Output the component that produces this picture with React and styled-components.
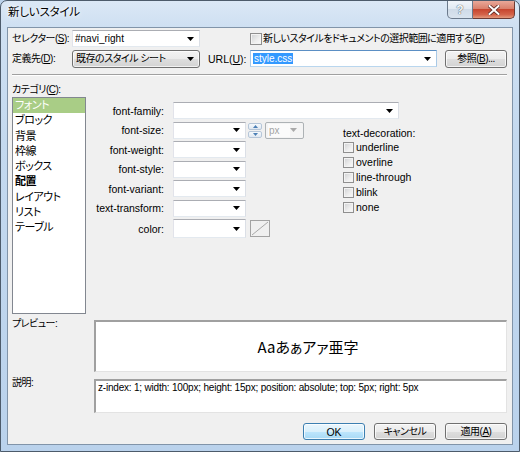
import React from 'react';
import styled, { createGlobalStyle, css } from 'styled-components';

const GlobalStyle = createGlobalStyle`
  html, body { margin: 0; padding: 0; background: #bcd3ec; }
  body {
    font-family: "Liberation Sans", "Noto Sans CJK JP", sans-serif;
    font-size: 10.5px;
    font-feature-settings: "palt";
    color: #000;
  }
  * { box-sizing: border-box; }
`;

const jpText = css`
  font-size: 10px;
  letter-spacing: -0.5px;
`;

const Window = styled.div`
  width: 520px;
  height: 452px;
  display: flex;
  flex-direction: column;
  border: 1px solid #4d5b6b;
  border-radius: 7px 7px 0 0;
  background: linear-gradient(180deg, #dbe8f6 0px, #cfe0f2 24px, #c4d9ef 140px, #bad2ec 100%);
  overflow: hidden;
`;

const TitleBar = styled.div`
  height: 26px;
  display: flex;
  align-items: flex-start;
  padding: 0 4px 0 7px;
`;

const Title = styled.div`
  font-size: 11.5px;
  letter-spacing: -0.2px;
  line-height: 16px;
  padding-top: 3px;
  color: #000;
  text-shadow: 0 0 6px #fff, 0 0 3px #fff;
`;

const CaptionGroup = styled.div`
  margin-left: auto;
  display: flex;
`;

const CaptionButton = styled.div`
  height: 18px;
  display: flex;
  align-items: center;
  justify-content: center;
  border: 1px solid #6b7a8c;
  border-top: none;
  ${p => p.$close ? css`
    width: 42px;
    border-left: none;
    border-color: #6d3a33;
    border-radius: 0 0 5px 0;
    background: linear-gradient(180deg, #e9a899 0%, #d9806c 45%, #c7462f 50%, #d4634a 80%, #e39a7d 100%);
  ` : css`
    width: 26px;
    border-radius: 0 0 0 5px;
    background: linear-gradient(180deg, #f1f5fa 0%, #e2eaf3 45%, #cfdbe8 50%, #d9e4ef 100%);
  `}
`;

const HelpGlyph = styled.span`
  font-family: "Liberation Sans", sans-serif;
  font-size: 12px;
  font-weight: bold;
  color: #f7f9fb;
  text-shadow: 0 0 1px #4e5a68, 0 0 1px #4e5a68;
  line-height: 1;
`;

const Client = styled.div`
  flex: 1;
  margin: 0 6px 6px;
  border: 1px solid #8194a9;
  background: #f0f0f0;
  padding: 2px 5px 3px 4px;
  display: flex;
  flex-direction: column;
`;

const TopGrid = styled.div`
  display: grid;
  grid-template-columns: 60px 128px 50px 187px 8px 62px;
  grid-template-rows: 17px 17px;
  row-gap: 3px;
  align-items: center;
`;

const Label = styled.span`
  white-space: nowrap;
  line-height: 14px;
  ${p => p.$jp && jpText}
  ${p => p.$indent && css`padding-left: ${p.$indent}px;`}
`;

const Key = styled.u`
  text-decoration: underline;
  text-underline-offset: 1px;
`;

const ComboField = styled.div`
  height: 17px;
  display: flex;
  align-items: center;
  padding: 0 5px 0 2px;
  background: #fff;
  border: 1px solid;
  border-color: ${p => p.$focus ? '#5b8fc4 #a9c9e6 #b9d6ee #a9c9e6' : '#abadb3 #dbdfe6 #e3e9ef #e2e3ea'};
`;

const FieldText = styled.span`
  flex: 1;
  white-space: nowrap;
  overflow: hidden;
  line-height: 14px;
  font-size: 10px;
  ${p => p.$jp && jpText}
`;

const Selected = styled.span`
  background: #3399ff;
  color: #fff;
  padding: 0 1px;
`;

const SelectButton = styled.div`
  height: 18px;
  display: flex;
  align-items: center;
  padding: 0 5px 0 3px;
  border: 1px solid #707070;
  border-radius: 3px;
  background: linear-gradient(180deg, #f3f3f3 0%, #ebebeb 50%, #dedede 50%, #d3d3d3 100%);
  box-shadow: inset 0 0 0 1px rgba(255, 255, 255, 0.7);
`;

const PushButton = styled.div`
  height: ${p => p.$h || 18}px;
  display: flex;
  align-items: center;
  justify-content: center;
  white-space: nowrap;
  line-height: 14px;
  ${p => p.$jp && jpText}
  border: 1px solid ${p => p.$default ? '#3c7fb1' : '#707070'};
  border-radius: 3px;
  background: ${p => p.$default
    ? 'linear-gradient(180deg, #eaf6fd 0%, #d9f0fc 50%, #bee6fd 50%, #a7d9f5 100%)'
    : 'linear-gradient(180deg, #f3f3f3 0%, #ebebeb 50%, #dedede 50%, #d3d3d3 100%)'};
  box-shadow: inset 0 0 0 1px rgba(255, 255, 255, 0.75);
  ${p => p.$width && css`width: ${p.$width}px;`}
`;

const CheckLine = styled.div`
  grid-column: 4 / 7;
  display: flex;
  align-items: center;
  gap: 1px;
  white-space: nowrap;
`;

const CheckBox = styled.span`
  flex: none;
  width: ${p => p.$size || 11}px;
  height: ${p => p.$size || 11}px;
  border: 1px solid #8f8f8f;
  background: linear-gradient(135deg, #cfd0d2 0%, #eeeeee 60%, #fafafa 100%);
  box-shadow: inset 0 0 0 1px #f3f3f3;
`;

const Separator = styled.div`
  margin-top: 7px;
  border-top: 1px solid #a0a0a0;
  border-bottom: 1px solid #fff;
`;

const SectionLabel = styled.div`
  margin-top: 7px;
  line-height: 14px;
  height: 14px;
  ${jpText}
`;

const MainArea = styled.div`
  display: flex;
  height: 217px;
`;

const ListBox = styled.div`
  width: 74px;
  flex: none;
  border: 1px solid #828790;
  background: #fff;
  display: flex;
  flex-direction: column;
`;

const ListItem = styled.div`
  height: 15.3px;
  line-height: 15px;
  padding-left: 2px;
  font-size: 11px;
  letter-spacing: -0.5px;
  white-space: nowrap;
  ${p => p.$selected && css`background: #a9cd86; color: #fff;`}
  ${p => p.$bold && css`font-weight: bold;`}
`;

const RightPanel = styled.div`
  flex: 1;
  display: flex;
  flex-direction: column;
  gap: 2.5px;
  padding-top: 5px;
`;

const FieldRow = styled.div`
  display: flex;
  align-items: center;
  height: ${p => p.$h || 17}px;
`;

const FieldLabel = styled.span`
  width: 78px;
  margin-right: 9px;
  text-align: right;
  white-space: nowrap;
  line-height: 14px;
`;

const Field = styled(ComboField)`
  width: ${p => p.$w}px;
  height: ${p => p.$h || 17}px;
  flex: none;
`;

const LowerArea = styled.div`
  display: flex;
`;

const FieldColumn = styled.div`
  width: 257px;
  display: flex;
  flex-direction: column;
  gap: 2.5px;
`;

const Spinner = styled.div`
  width: 14px;
  height: 15px;
  margin-left: 2px;
  display: flex;
  flex-direction: column;
  gap: 1px;
`;

const SpinHalf = styled.div`
  flex: 1;
  display: flex;
  align-items: center;
  justify-content: center;
  border: 1px solid #b6c6d8;
  border-radius: 2px;
  background: linear-gradient(180deg, #f6f9fc 0%, #dfe8f1 100%);
`;

const UnitSelect = styled.div`
  width: 39px;
  height: 17px;
  margin-left: 3px;
  display: flex;
  align-items: center;
  padding: 1px 6px 1px 2px;
  border: 1px solid #adb2b5;
  border-radius: 2px;
  background: #f4f4f4;
  color: #a3a3a3;
`;

const UnitText = styled.span`
  flex: 1;
  background: #fbfbfb;
  line-height: 13px;
  font-size: 10px;
  padding-left: 1px;
`;

const Swatch = styled.div`
  width: 20px;
  height: 17px;
  margin-left: 4px;
  border: 1px solid #a3a3a3;
  background: #f0f0f0;
  display: flex;
`;

const Decoration = styled.div`
  padding-top: 4px;
  display: flex;
  flex-direction: column;
`;

const DecoTitle = styled.div`
  line-height: 14px;
  white-space: nowrap;
`;

const DecoRow = styled.div`
  height: 15px;
  display: flex;
  align-items: center;
  gap: 2px;
  white-space: nowrap;
`;

const BottomGrid = styled.div`
  margin-top: 6px;
  display: grid;
  grid-template-columns: 82px 1fr;
  grid-template-rows: 52px 34px;
  row-gap: 7px;
`;

const BoxLabel = styled.span`
  line-height: 12px;
  margin-top: -2px;
  align-self: start;
  ${jpText}
`;

const SunkenBox = styled.div`
  background: #fff;
  border-style: solid;
  border-width: 2px 1px 1px 2px;
  border-color: #a0a0a0 #e3e3e3 #e3e3e3 #a0a0a0;
  ${p => p.$center ? css`
    display: flex;
    align-items: center;
    justify-content: center;
    font-family: "Noto Sans CJK JP", sans-serif;
    font-size: 15px;
    padding-left: 14px;
  ` : css`
    padding: 1px 2px;
    font-size: 10px;
    letter-spacing: -0.2px;
    line-height: 12px;
    white-space: nowrap;
  `}
`;

const ButtonRow = styled.div`
  margin-top: 10px;
  display: flex;
  justify-content: flex-end;
  gap: 9px;
`;

const DropArrow = ({ color = '#000' }) => (
  <svg width="7" height="4" viewBox="0 0 7 4"><path d="M0 0H7L3.5 4Z" fill={color} /></svg>
);

const SpinArrow = ({ up }) => (
  <svg width="5" height="3" viewBox="0 0 5 3">
    <path d={up ? 'M0 3H5L2.5 0Z' : 'M0 0H5L2.5 3Z'} fill="#4b7fb5" />
  </svg>
);

const CloseGlyph = () => (
  <svg width="12" height="10" viewBox="0 0 12 10">
    <path d="M1.5 1L10.5 9M10.5 1L1.5 9" stroke="#5a2a24" strokeWidth="3.6" strokeLinecap="square" />
    <path d="M1.5 1L10.5 9M10.5 1L1.5 9" stroke="#ffffff" strokeWidth="2" strokeLinecap="square" />
  </svg>
);

const SwatchLine = () => (
  <svg width="18" height="15" viewBox="0 0 18 15">
    <path d="M1 14L17 1" stroke="#a8a8a8" strokeWidth="1" />
  </svg>
);

const categories = ['フォント', 'ブロック', '背景', '枠線', 'ボックス', '配置', 'レイアウト', 'リスト', 'テーブル'];
const decorations = ['underline', 'overline', 'line-through', 'blink', 'none'];
const simpleFields = ['font-weight:', 'font-style:', 'font-variant:', 'text-transform:'];

export default function App() {
  return (
    <>
      <GlobalStyle />
      <Window>
        <TitleBar>
          <Title>新しいスタイル</Title>
          <CaptionGroup>
            <CaptionButton><HelpGlyph>?</HelpGlyph></CaptionButton>
            <CaptionButton $close><CloseGlyph /></CaptionButton>
          </CaptionGroup>
        </TitleBar>
        <Client>
          <TopGrid>
            <Label $jp>セレクター(<Key>S</Key>):</Label>
            <ComboField>
              <FieldText>#navi_right</FieldText>
              <DropArrow />
            </ComboField>
            <CheckLine>
              <CheckBox $size={12} />
              <Label $jp>新しいスタイルをドキュメントの選択範囲に適用する(<Key>P</Key>)</Label>
            </CheckLine>
            <Label $jp>定義先(<Key>D</Key>):</Label>
            <SelectButton>
              <FieldText $jp>既存のスタイル シート</FieldText>
              <DropArrow />
            </SelectButton>
            <Label $indent={8}>URL(<Key>U</Key>):</Label>
            <ComboField $focus>
              <FieldText><Selected>style.css</Selected></FieldText>
              <DropArrow />
            </ComboField>
            <span />
            <PushButton $jp>参照(<Key>B</Key>)...</PushButton>
          </TopGrid>
          <Separator />
          <SectionLabel>カテゴリ(<Key>C</Key>):</SectionLabel>
          <MainArea>
            <ListBox>
              {categories.map((c, i) => (
                <ListItem key={c} $selected={i === 0} $bold={c === '配置'}>{c}</ListItem>
              ))}
            </ListBox>
            <RightPanel>
              <FieldRow>
                <FieldLabel>font-family:</FieldLabel>
                <Field $w={226}><FieldText /><DropArrow /></Field>
              </FieldRow>
              <LowerArea>
                <FieldColumn>
                  <FieldRow>
                    <FieldLabel>font-size:</FieldLabel>
                    <Field $w={73}><FieldText /><DropArrow /></Field>
                    <Spinner>
                      <SpinHalf><SpinArrow up /></SpinHalf>
                      <SpinHalf><SpinArrow /></SpinHalf>
                    </Spinner>
                    <UnitSelect>
                      <UnitText>px</UnitText>
                      <DropArrow color="#a9a9a9" />
                    </UnitSelect>
                  </FieldRow>
                  {simpleFields.map(f => (
                    <FieldRow key={f}>
                      <FieldLabel>{f}</FieldLabel>
                      <Field $w={73}><FieldText /><DropArrow /></Field>
                    </FieldRow>
                  ))}
                  <FieldRow $h={19}>
                    <FieldLabel>color:</FieldLabel>
                    <Field $w={73} $h={19}><FieldText /><DropArrow /></Field>
                    <Swatch><SwatchLine /></Swatch>
                  </FieldRow>
                </FieldColumn>
                <Decoration>
                  <DecoTitle>text-decoration:</DecoTitle>
                  {decorations.map(d => (
                    <DecoRow key={d}>
                      <CheckBox />
                      <span>{d}</span>
                    </DecoRow>
                  ))}
                </Decoration>
              </LowerArea>
            </RightPanel>
          </MainArea>
          <BottomGrid>
            <BoxLabel>プレビュー:</BoxLabel>
            <SunkenBox $center>Aaあぁアァ亜字</SunkenBox>
            <BoxLabel>説明:</BoxLabel>
            <SunkenBox>z-index: 1; width: 100px; height: 15px; position: absolute; top: 5px; right: 5px</SunkenBox>
          </BottomGrid>
          <ButtonRow>
            <PushButton $default $width={62} $h={17}>OK</PushButton>
            <PushButton $jp $width={62} $h={17}>キャンセル</PushButton>
            <PushButton $jp $width={62} $h={17}>適用(<Key>A</Key>)</PushButton>
          </ButtonRow>
        </Client>
      </Window>
    </>
  );
}
